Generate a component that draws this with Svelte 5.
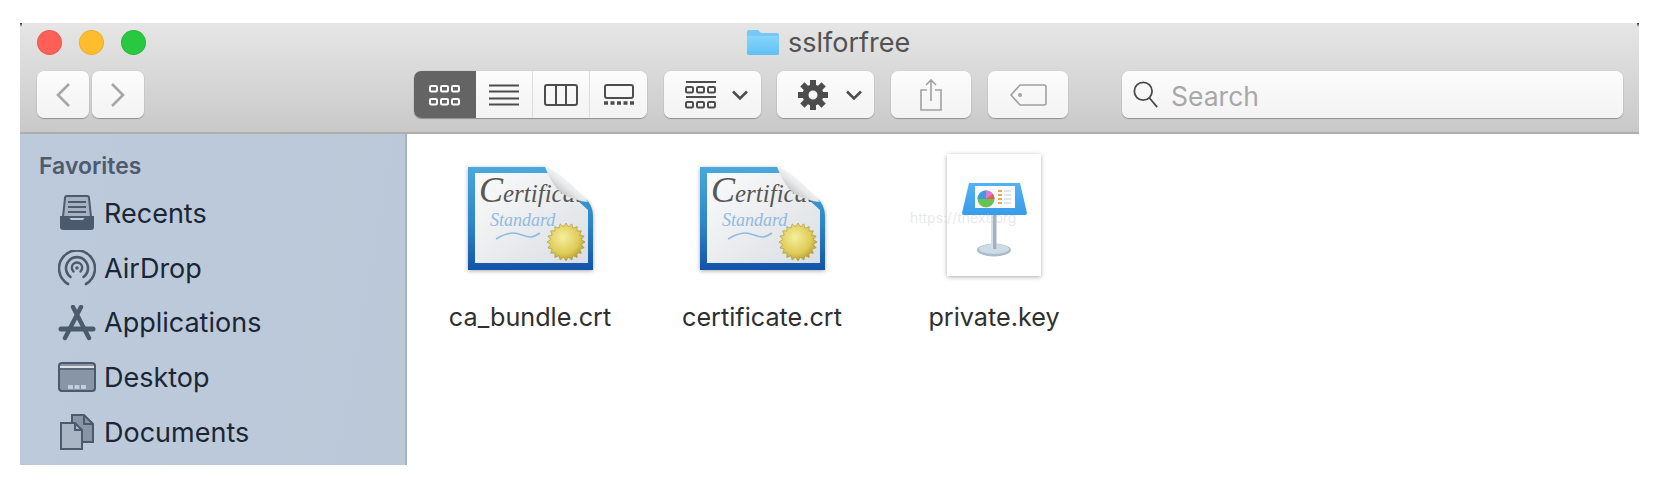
<script>
  const favorites = ['Recents', 'AirDrop', 'Applications', 'Desktop', 'Documents'];
  const certs = ['ca_bundle.crt', 'certificate.crt'];

  // gold seal outline
  const seal = Array.from({ length: 40 }, (_, i) => {
    const r = i % 2 ? 15.5 : 19;
    const a = (i / 40) * Math.PI * 2;
    return `${(102 + r * Math.cos(a)).toFixed(1)},${(88 + r * Math.sin(a)).toFixed(1)}`;
  }).join(' ');
  const gearTeeth = [0, 45, 90, 135, 180, 225, 270, 315];
</script>

{#snippet chevron()}
  <svg class="chev" width="18" height="12" viewBox="0 0 18 12"><path d="M2 2.5 9 9.5 16 2.5" fill="none" stroke="#4d4d4d" stroke-width="2.6" /></svg>
{/snippet}

{#snippet cells(y)}
  {#each [1, 12, 23] as x}
    <rect {x} {y} width="7" height="5.5" rx="1.2" fill="none" stroke="currentColor" stroke-width="2" />
  {/each}
{/snippet}

{#snippet certIcon()}
  <svg class="file-icon" width="132" height="124" viewBox="0 0 132 124">
    <defs>
      <linearGradient id="frame" x1="0" y1="0" x2="0" y2="1">
        <stop offset="0" stop-color="#4aa8dc" />
        <stop offset=".55" stop-color="#2d86c8" />
        <stop offset="1" stop-color="#1353a8" />
      </linearGradient>
      <linearGradient id="paper" x1="0" y1="0" x2="1" y2="1">
        <stop offset="0" stop-color="#fbfbfb" />
        <stop offset="1" stop-color="#dadee3" />
      </linearGradient>
      <linearGradient id="fold" x1=".25" y1=".75" x2=".7" y2=".3">
        <stop offset="0" stop-color="#b9bbbf" />
        <stop offset=".5" stop-color="#e9eaeb" />
        <stop offset="1" stop-color="#ffffff" />
      </linearGradient>
      <radialGradient id="gold" cx=".42" cy=".38" r=".7">
        <stop offset="0" stop-color="#f6ee9c" />
        <stop offset=".6" stop-color="#dfcb58" />
        <stop offset="1" stop-color="#a8902c" />
      </radialGradient>
      <clipPath id="page"><path d="M11 19H86L124 56V109H11Z" /></clipPath>
    </defs>
    <path class="sheet" d="M4 13H81L104 34 124 47Q129 54 129 62V116H4Z" fill="url(#frame)" />
    <path d="M11 19H88L113 46 124 56V109H11Z" fill="url(#paper)" />
    <g clip-path="url(#page)">
      <text class="script" x="15" y="48" fill="#565656"><tspan font-size="36">C</tspan><tspan font-size="25">ertificate</tspan></text>
      <text class="script" x="26" y="72" font-size="18" fill="#8fbbe2">Standard</text>
      <path d="M32 85C44 78 50 78 58 81S68 84 76 79" fill="none" stroke="#8dbbe2" stroke-width="1.5" />
    </g>
    <path d="M81 13C96 18 110 32 124 48C112 47 100 42 93 35C88 29 84 20 81 13Z" fill="url(#fold)" />
    <polygon points={seal} fill="url(#gold)" stroke="#a8932f" stroke-width=".6" />
  </svg>
{/snippet}

<div class="window">
  <header class="chrome">
    <div class="titlebar">
      <div class="lights">
        <span class="light red"></span>
        <span class="light amber"></span>
        <span class="light green"></span>
      </div>
      <div class="title">
        <svg width="32" height="25" viewBox="0 0 32 25">
          <defs>
            <linearGradient id="folder" x1="0" y1="0" x2="0" y2="1">
              <stop offset="0" stop-color="#84d6fb" />
              <stop offset="1" stop-color="#62c0f5" />
            </linearGradient>
          </defs>
          <path d="M0 2Q0 0 2 0H11L14 3H30Q32 3 32 5V23Q32 25 30 25H2Q0 25 0 23Z" fill="#74c8f3" />
          <path d="M0 6H32V23Q32 25 30 25H2Q0 25 0 23Z" fill="url(#folder)" />
        </svg>
        <span>sslforfree</span>
      </div>
    </div>

    <div class="toolbar">
      <div class="nav">
        <button class="btn nav-btn" aria-label="Back">
          <svg width="16" height="26" viewBox="0 0 16 26"><path d="M14 2 3 13 14 24" fill="none" stroke="#a6a6a6" stroke-width="2.6" /></svg>
        </button>
        <button class="btn nav-btn" aria-label="Forward">
          <svg width="16" height="26" viewBox="0 0 16 26"><path d="M2 2 13 13 2 24" fill="none" stroke="#a6a6a6" stroke-width="2.6" /></svg>
        </button>
      </div>

      <div class="segments">
        <button class="seg active" aria-label="Icons">
          <svg width="32" height="22" viewBox="0 0 32 22">
            {@render cells(2)}
            {@render cells(15)}
          </svg>
        </button>
        <button class="seg" aria-label="List">
          <svg width="32" height="22" viewBox="0 0 32 22" stroke="#4d4d4d" stroke-width="2">
            <path d="M1 1.5H31M1 7.5H31M1 14.5H31M1 20.5H31" />
          </svg>
        </button>
        <button class="seg" aria-label="Columns">
          <svg width="34" height="22" viewBox="0 0 34 22" fill="none" stroke="#4d4d4d" stroke-width="2">
            <rect x="1" y="1" width="32" height="20" rx="2" />
            <path d="M12 1V21M22 1V21" />
          </svg>
        </button>
        <button class="seg" aria-label="Gallery">
          <svg width="32" height="22" viewBox="0 0 32 22">
            <rect x="2" y="1" width="28" height="13" rx="2" fill="none" stroke="#4d4d4d" stroke-width="2" />
            <path d="M1 19H31" stroke="#4d4d4d" stroke-width="3.4" stroke-dasharray="4 2.5" />
          </svg>
        </button>
      </div>

      <button class="btn menu-btn group-btn" aria-label="Group">
        <svg width="32" height="28" viewBox="0 0 32 28" color="#4d4d4d">
          <path d="M1 1H31M1 16H31" stroke="#4d4d4d" stroke-width="2" />
          {@render cells(6)}
          {@render cells(21)}
        </svg>
        {@render chevron()}
      </button>

      <button class="btn menu-btn gear-btn" aria-label="Action">
        <svg width="30" height="30" viewBox="0 0 30 30">
          {#each gearTeeth as deg}
            <rect x="12" y="0" width="6" height="8" fill="#4d4d4d" transform="rotate({deg} 15 15)" />
          {/each}
          <circle cx="15" cy="15" r="7.5" fill="none" stroke="#4d4d4d" stroke-width="6" />
        </svg>
        {@render chevron()}
      </button>

      <button class="btn icon-btn share" aria-label="Share">
        <svg width="24" height="32" viewBox="0 0 24 32" fill="none" stroke="#a0a0a0" stroke-width="1.6">
          <path d="M8 11H2V31H22V11H16" />
          <path d="M12 22V1M7 6 12 1 17 6" />
        </svg>
      </button>

      <button class="btn icon-btn tag" aria-label="Tags">
        <svg width="38" height="22" viewBox="0 0 38 22" fill="none" stroke="#a0a0a0" stroke-width="1.6">
          <path d="M11 1H35Q37 1 37 3V19Q37 21 35 21H11L2 11Z" />
          <circle cx="11" cy="11" r="1.2" />
        </svg>
      </button>

      <label class="search">
        <svg width="28" height="30" viewBox="0 0 30 32" fill="none" stroke="#4a4a4a" stroke-width="1.9">
          <circle cx="12" cy="12" r="9.5" />
          <path d="M18.5 19 27 29" />
        </svg>
        <input placeholder="Search" aria-label="Search" />
      </label>
    </div>
  </header>

  <div class="body">
    <nav class="sidebar">
      <h2>Favorites</h2>
      <ul>
        {#each favorites as name}
          <li>
            <span class="side-icon">
              {#if name === 'Recents'}
                <svg width="38" height="36" viewBox="0 0 38 36">
                  <path d="M5 22 7 3Q7 1 9 1H29Q31 1 31 3L33 22Z" fill="#a6b2c2" stroke="#4b5a6c" stroke-width="2" />
                  <path d="M10 7H28M10 12H28M10 17H28" stroke="#4b5a6c" stroke-width="2" />
                  <path d="M2 21H10L13 25H25L28 21H36V32Q36 35 33 35H5Q2 35 2 32Z" fill="#4b5a6c" />
                </svg>
              {:else if name === 'AirDrop'}
                <svg width="38" height="36" viewBox="0 0 38 36" fill="none" stroke="#4b5a6c" stroke-linecap="round">
                  <path d="M10 34A18 18 0 1 1 28 34" stroke-width="2.6" />
                  <path d="M12.5 27A11 11 0 1 1 25.5 27" stroke-width="2.6" />
                  <path d="M15.5 21.5A5.2 5.2 0 1 1 22.5 21.5" stroke-width="2.4" />
                  <circle cx="19" cy="18" r="1" stroke-width="1.6" />
                </svg>
              {:else if name === 'Applications'}
                <svg width="38" height="36" viewBox="0 0 38 36" fill="none" stroke="#4b5a6c" stroke-linecap="round">
                  <path d="M23 2 7 33M15 2 31 33" stroke-width="4.4" />
                  <path d="M3 24H35" stroke-width="5" />
                </svg>
              {:else if name === 'Desktop'}
                <svg width="38" height="30" viewBox="0 0 38 30">
                  <rect x="1" y="1" width="36" height="28" rx="3" fill="#8795a6" stroke="#4b5a6c" stroke-width="2" />
                  <path d="M2 5H36" stroke="#d9e0e8" stroke-width="2" />
                  <path d="M2 7H36" stroke="#4b5a6c" stroke-width="1.4" />
                  <path d="M10 25H28" stroke="#c3ccd8" stroke-width="4" stroke-dasharray="5 1.5" />
                </svg>
              {:else}
                <svg width="38" height="36" viewBox="0 0 38 36" stroke="#4b5a6c" stroke-width="2">
                  <path d="M14 1H26L35 10V28H14Z" fill="#8795a6" />
                  <path d="M26 1V10H35" fill="none" />
                  <path d="M3 9H17L24 16V35H3Z" fill="#aab6c6" />
                  <path d="M17 9V16H24" fill="none" />
                </svg>
              {/if}
            </span>
            {name}
          </li>
        {/each}
      </ul>
    </nav>

    <main class="files">
      {#each certs as name}
        <figure class="file">
          {@render certIcon()}
          <figcaption>{name}</figcaption>
        </figure>
      {/each}

      <figure class="file">
        <svg class="file-icon" width="96" height="124" viewBox="0 0 96 124">
          <defs>
            <linearGradient id="lectern" x1="0" y1="0" x2="0" y2="1">
              <stop offset="0" stop-color="#52b2f2" />
              <stop offset="1" stop-color="#3a9be8" />
            </linearGradient>
          </defs>
          <rect class="sheet" x="1" y="0" width="94" height="122" fill="#fff" />
          <ellipse cx="48" cy="96" rx="17" ry="6.5" fill="#a9bccb" />
          <ellipse cx="48" cy="95" rx="15" ry="5" fill="#cfdbe4" />
          <rect x="45" y="58" width="5.5" height="37" fill="#9fb3c4" />
          <rect x="45" y="58" width="2" height="37" fill="#d5dfe7" />
          <path d="M23 29H74L81 59Q81 61 79 61H18Q16 61 16 59Z" fill="url(#lectern)" />
          <path d="M29 32H69V54H29Z" fill="#fafcff" />
          <circle cx="40" cy="45" r="8.5" fill="#66c255" />
          <path d="M40 45V36.5A8.5 8.5 0 0 0 31.5 45Z" fill="#3a9de0" />
          <path d="M40 45V36.5A8.5 8.5 0 0 1 47 40Z" fill="#e177d8" />
          <path d="M40 45 47 40A8.5 8.5 0 0 1 48.5 45Z" fill="#f05a50" />
          <path d="M52 37H56M52 41H56M52 45H56M52 49H56" stroke="#e8a94a" stroke-width="2" />
          <path d="M58 37H65M58 41H65M58 45H65M58 49H65" stroke="#c7ccd2" stroke-width="1" />
        </svg>
        <figcaption>private.key</figcaption>
      </figure>

      <span class="watermark">https://tnext.org</span>
    </main>
  </div>
</div>

<style>
  :global(body) { background: #fff; }
  .window { width: 1619px; height: 442px; margin: 23px 0 0 20px; position: relative; display: flex; flex-direction: column; font-family: Inter, "Noto Sans", sans-serif; overflow: hidden; }
  /* the crop leaves a speck of desktop in both top corners */
  .window::before, .window::after { content: ""; position: absolute; top: 0; width: 2px; height: 4px; background: linear-gradient(#22304a, rgba(34,48,74,0)); }
  .window::before { left: 0; }
  .window::after { right: 0; }
  .chrome { height: 109px; flex: none; background: linear-gradient(#e6e6e6, #c9c9c9); border-bottom: 2px solid #aeaeae; box-sizing: content-box; }

  .titlebar { height: 38px; margin-bottom: 10px; display: flex; align-items: center; }
  .lights { display: flex; gap: 17px; padding-left: 17px; }
  .light { width: 25px; height: 25px; border-radius: 50%; box-sizing: border-box; border: 1px solid rgba(0,0,0,.08); }
  .red { background: #ff5f57; }
  .amber { background: #ffbd2e; }
  .green { background: #28c840; }
  .title { display: flex; align-items: center; gap: 9px; margin-left: 601px; color: #525252; font-size: 27px; }

  .toolbar { display: flex; align-items: stretch; height: 47px; padding-left: 17px; }
  button { padding: 0; border: 0; font: inherit; }
  .btn, .segments, .search { background: linear-gradient(#fcfcfc, #f3f3f3); border-radius: 7px; box-shadow: 0 1px 1px rgba(0,0,0,.28), 0 0 0 .5px rgba(0,0,0,.06); }
  .btn { display: flex; align-items: center; justify-content: center; }
  .nav { display: flex; gap: 3px; margin-right: 270px; }
  .nav-btn { width: 52px; }
  .segments { display: flex; width: 233px; overflow: hidden; margin-right: 17px; }
  .seg { flex: 56px; background: none; display: flex; align-items: center; justify-content: center; border-right: 1px solid #dcdcdc; }
  .seg:last-child { border-right: 0; }
  .seg.active { flex: 0 0 62px; background: #646464; color: #fff; border-right: 0; }
  .menu-btn { width: 97px; justify-content: flex-start; padding-left: 21px; box-sizing: border-box; }
  .group-btn { margin-right: 16px; gap: 14px; }
  .gear-btn { margin-right: 17px; gap: 17px; }
  .icon-btn { width: 80px; }
  .share { margin-right: 17px; }
  .tag { margin-right: 54px; }
  .search { width: 501px; display: flex; align-items: center; padding-left: 10px; gap: 11px; box-sizing: border-box; }
  input { flex: 1; min-width: 0; border: 0; background: none; outline: 0; font: 26.5px Inter, "Noto Sans", sans-serif; color: #333; padding: 2px 0 0; }
  input::placeholder { color: #a8a8a8; opacity: 1; }

  .body { flex: 1; display: flex; min-height: 0; }
  .sidebar { width: 366px; flex: none; background: linear-gradient(100deg, #bccadb, #bac8d8); border-right: 2px solid #a3b2c5; padding: 20px 0 0 19px; box-sizing: content-box; }
  h2 { margin: 0; font-size: 23px; line-height: 25px; font-weight: 600; color: #4e5b6c; }
  ul { list-style: none; margin: 0; padding: 0; }
  li { height: 54.7px; display: flex; align-items: center; gap: 8px; font-size: 27px; color: #1b2635; }
  li:first-child { margin-top: 7px; }
  .side-icon { width: 38px; margin-left: 19px; display: flex; justify-content: center; }

  .files { flex: 1; position: relative; display: flex; align-items: flex-start; background: #fff; padding: 20px 0 0 7px; }
  .file { width: 232px; margin: 0; display: flex; flex-direction: column; align-items: center; }
  .file-icon { display: block; overflow: visible; }
  .sheet { filter: drop-shadow(0 1px 2px rgba(0,0,0,.32)); }
  figcaption { margin-top: 23px; font-size: 25.2px; line-height: 32px; color: #2f2f2f; }
  .script { font-family: "Liberation Serif", serif; font-style: italic; }
  .watermark { position: absolute; left: 503px; top: 75px; font-size: 14px; color: rgba(190,190,190,.35); }
</style>
